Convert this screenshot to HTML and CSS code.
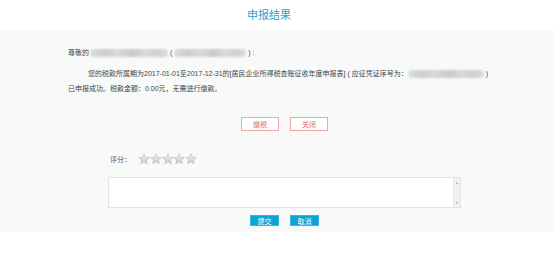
FILE: index.html
```html
<!DOCTYPE html>
<html>
<head>
	<meta charset="utf-8">
	<title>申报结果</title>
	<link rel="stylesheet" href="styles.css">
</head>
<body>
	<div class="page_title">申报结果</div>

	<div class="panel">
		<p class="greet">尊敬的<span class="blur name"></span> ( <span class="blur taxid"></span> ) :</p>
		<p class="msg">您的税款所属期为2017-01-01至2017-12-31的[居民企业所得税查账征收年度申报表] ( 应征凭证序号为：<span class="blur serial"></span> )<br><span class="msg_tail">已申报成功。税款金额：0.00元，无需进行缴款。</span></p>

		<div class="actions top_actions">
			<button class="btn_line">缴税</button>
			<button class="btn_line">关闭</button>
		</div>

		<div class="rate">
			<span class="rate_label">评分：</span>
			<span class="stars">
				<svg class="star" viewBox="0 0 24 24"><use href="#star"/></svg>
				<svg class="star" viewBox="0 0 24 24"><use href="#star"/></svg>
				<svg class="star" viewBox="0 0 24 24"><use href="#star"/></svg>
				<svg class="star" viewBox="0 0 24 24"><use href="#star"/></svg>
				<svg class="star" viewBox="0 0 24 24"><use href="#star"/></svg>
			</span>
		</div>

		<div class="comment">
			<textarea class="comment_text"></textarea>
			<div class="scroll">
				<span class="arrow up"></span>
				<span class="arrow down"></span>
			</div>
		</div>

		<div class="actions bottom_actions">
			<button class="btn_fill">提交</button>
			<button class="btn_fill">取消</button>
		</div>
	</div>

	<svg class="defs" width="0" height="0">
		<defs>
			<linearGradient id="star_grad" x1="0" y1="0" x2="0" y2="1">
				<stop offset="0" stop-color="#f4f4f4"/>
				<stop offset="1" stop-color="#c6c6c6"/>
			</linearGradient>
			<polygon id="star" points="12,1.5 15,8.4 22.5,9.1 16.8,14 18.5,21.5 12,17.6 5.5,21.5 7.2,14 1.5,9.1 9,8.4" fill="url(#star_grad)" stroke="#b9b9b9" stroke-width="1.2" stroke-linejoin="round"/>
		</defs>
	</svg>
</body>
</html>
```

FILE: styles.css
```css
html, body { margin: 0; padding: 0; }
body { background: #fff; font-family: "Liberation Sans", "Noto Sans CJK SC", sans-serif; color: #444; }
p { margin: 0; }

.page_title { height: 30px; line-height: 28px; padding-right: 16px; text-align: center; font-size: 11px; color: #1fa3d6; font-family: "Noto Sans CJK SC", sans-serif; }

.panel { background: #f8f9f9; padding: 15px 53px 6px 68px; font-size: 7px; line-height: 15px; }

.greet { white-space: nowrap; }
.msg { margin-top: 6px; text-indent: 20px; white-space: nowrap; }
.msg_tail { display: inline-block; text-indent: 0; }

.blur { display: inline-block; height: 8px; vertical-align: middle; border-radius: 4px; filter: blur(1.1px);
	background: linear-gradient(90deg, #dcdcdc, #cdcdcd 20%, #d9d9d9 35%, #c9c9c9 55%, #dadada 70%, #cfcfcf 85%, #dcdcdc); }
.name { width: 78px; margin-left: 1px; }
.taxid { width: 72px; }
.serial { width: 76px; }

.actions { display: flex; justify-content: center; gap: 11px; }
.actions button { font-family: "Noto Sans CJK SC", sans-serif; font-size: 7px; padding: 0; cursor: pointer; }
.top_actions { margin-top: 21px; }
.btn_line { width: 38px; height: 14px; line-height: 12px; background: #fff; border: 1px solid #f1a4a4; color: #e16363; }
.bottom_actions { margin-top: 7px; }
.btn_fill { width: 29px; height: 11px; line-height: 10px; background: #0ea3d3; border: 1px solid #35b4de; color: #fff; }

.rate { display: flex; align-items: center; margin-top: 22px; padding-left: 42px; height: 12px; }
.rate_label { color: #555; }
.stars { display: flex; margin-left: 7px; }
.star { width: 12px; height: 12px; margin-right: -0.2px; }

.comment { display: flex; margin: 12px 40px 0; height: 31px; box-sizing: border-box; border: 1px solid #e4e4e4; background: #fff; }
.comment_text { flex: 1; border: 0; margin: 0; padding: 2px; resize: none; outline: none; background: #fff; }
.scroll { width: 6px; background: #f0f0f0; border-left: 1px solid #e6e6e6; display: flex; flex-direction: column; justify-content: space-between; align-items: center; padding: 4px 0 3px; }
.arrow { width: 0; height: 0; border-left: 1.5px solid transparent; border-right: 1.5px solid transparent; }
.arrow.up { border-bottom: 2px solid #9a9a9a; }
.arrow.down { border-top: 2px solid #9a9a9a; }

.defs { position: absolute; }
```
